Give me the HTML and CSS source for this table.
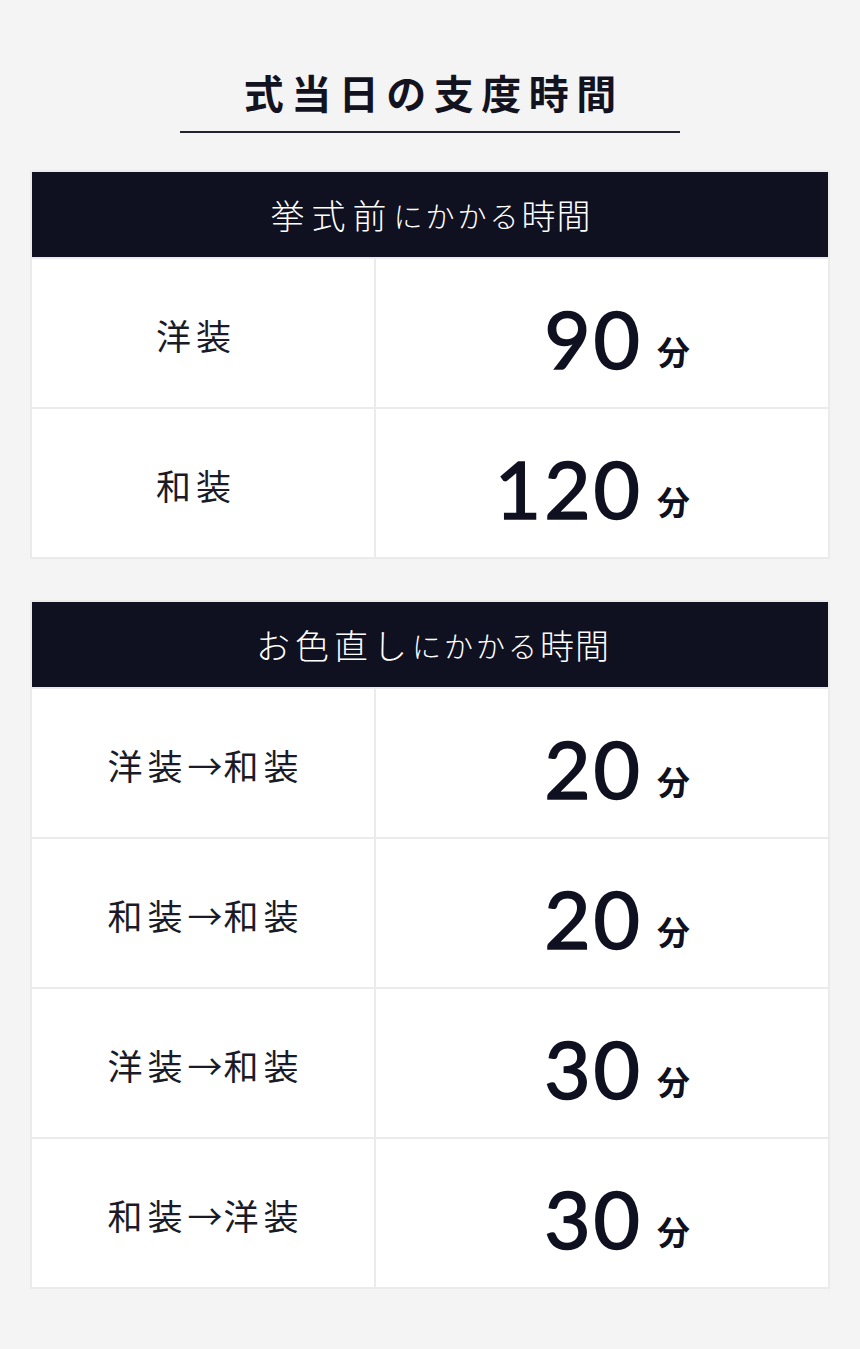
FILE: index.html
```html
<!DOCTYPE html>
<html lang="ja">
<head>
<meta charset="utf-8">
<title>式当日の支度時間</title>
<link rel="stylesheet" href="styles.css">
</head>
<body>
<main class="page">
  <header class="heading">
    <h1 class="heading__title">式当日の支度時間</h1>
    <div class="heading__rule"></div>
  </header>

  <section class="table table--pre">
    <div class="table__head">挙式前<span class="table__kana">にかかる</span><span class="table__tail">時間</span></div>
    <div class="table__row">
      <div class="table__label">洋装</div>
      <div class="table__value"><span class="table__amount"><span class="table__num">90</span><span class="table__unit">分</span></span></div>
    </div>
    <div class="table__row">
      <div class="table__label">和装</div>
      <div class="table__value"><span class="table__amount"><span class="table__num">120</span><span class="table__unit">分</span></span></div>
    </div>
  </section>

  <section class="table table--change">
    <div class="table__head">お色直し<span class="table__kana">にかかる</span><span class="table__tail">時間</span></div>
    <div class="table__row">
      <div class="table__label">洋装<span class="table__arrow">→</span>和装</div>
      <div class="table__value"><span class="table__amount"><span class="table__num">20</span><span class="table__unit">分</span></span></div>
    </div>
    <div class="table__row">
      <div class="table__label">和装<span class="table__arrow">→</span>和装</div>
      <div class="table__value"><span class="table__amount"><span class="table__num">20</span><span class="table__unit">分</span></span></div>
    </div>
    <div class="table__row">
      <div class="table__label">洋装<span class="table__arrow">→</span>和装</div>
      <div class="table__value"><span class="table__amount"><span class="table__num">30</span><span class="table__unit">分</span></span></div>
    </div>
    <div class="table__row">
      <div class="table__label">和装<span class="table__arrow">→</span>洋装</div>
      <div class="table__value"><span class="table__amount"><span class="table__num">30</span><span class="table__unit">分</span></span></div>
    </div>
  </section>
</main>
</body>
</html>
```

FILE: styles.css
```css
* { box-sizing: border-box; }

html, body {
  margin: 0;
  padding: 0;
  background: #f4f4f4;
}

body {
  font-family: "Noto Sans CJK JP", "Noto Sans", sans-serif;
  color: #0f1020;
}

.page {
  width: 860px;
  height: 1349px;
  padding: 64px 30px 0;
  display: flex;
  flex-direction: column;
}

.heading {
  display: flex;
  flex-direction: column;
  align-items: center;
}

.heading__title {
  margin: 0;
  font-size: 40px;
  line-height: 56px;
  font-weight: 700;
  letter-spacing: 7.5px;
  padding-left: 7.5px;
  color: #12131f;
}

.heading__rule {
  width: 500px;
  height: 2px;
  margin-top: 11px;
  background: #22232f;
}

.table {
  border: 2px solid #ebebeb;
  background: #fff;
  display: flex;
  flex-direction: column;
}

.table--pre { margin-top: 37px; }
.table--change { margin-top: 41px; }

.table__head {
  height: 85px;
  background: #0f1020;
  color: #fff;
  display: flex;
  align-items: center;
  justify-content: center;
  font-size: 34px;
  font-weight: 300;
  letter-spacing: 7px;
  padding-left: 2px;
}

.table--change .table__head {
  letter-spacing: 5px;
  padding-left: 6px;
}

.table__kana {
  font-size: 29px;
  letter-spacing: 3px;
}

.table__tail {
  letter-spacing: 1px;
}

.table__row {
  display: flex;
  height: 150px;
  border-top: 2px solid #ebebeb;
}

.table__label {
  width: 344px;
  border-right: 2px solid #ebebeb;
  display: flex;
  align-items: center;
  justify-content: center;
  font-size: 35px;
  font-weight: 400;
  letter-spacing: 5px;
  padding-left: 5px;
  padding-top: 2px;
  color: #1a1b27;
}

.table--pre .table__label {
  padding-left: 0;
  padding-right: 14px;
}

.table__arrow {
  letter-spacing: 0;
  margin-right: 1px;
}

.table__value {
  flex: 1;
  display: flex;
  align-items: center;
  justify-content: flex-end;
  padding-right: 138px;
  padding-top: 10px;
}

.table__amount {
  white-space: nowrap;
  line-height: 1;
}

.table__num {
  font-family: "Lato", "Noto Sans", sans-serif;
  font-size: 80px;
  font-weight: 400;
  -webkit-text-stroke: 1.6px #0f1020;
  letter-spacing: 3px;
  margin-right: 14px;
}

.table__unit {
  font-size: 33px;
  font-weight: 700;
  vertical-align: 4px;
}
```
